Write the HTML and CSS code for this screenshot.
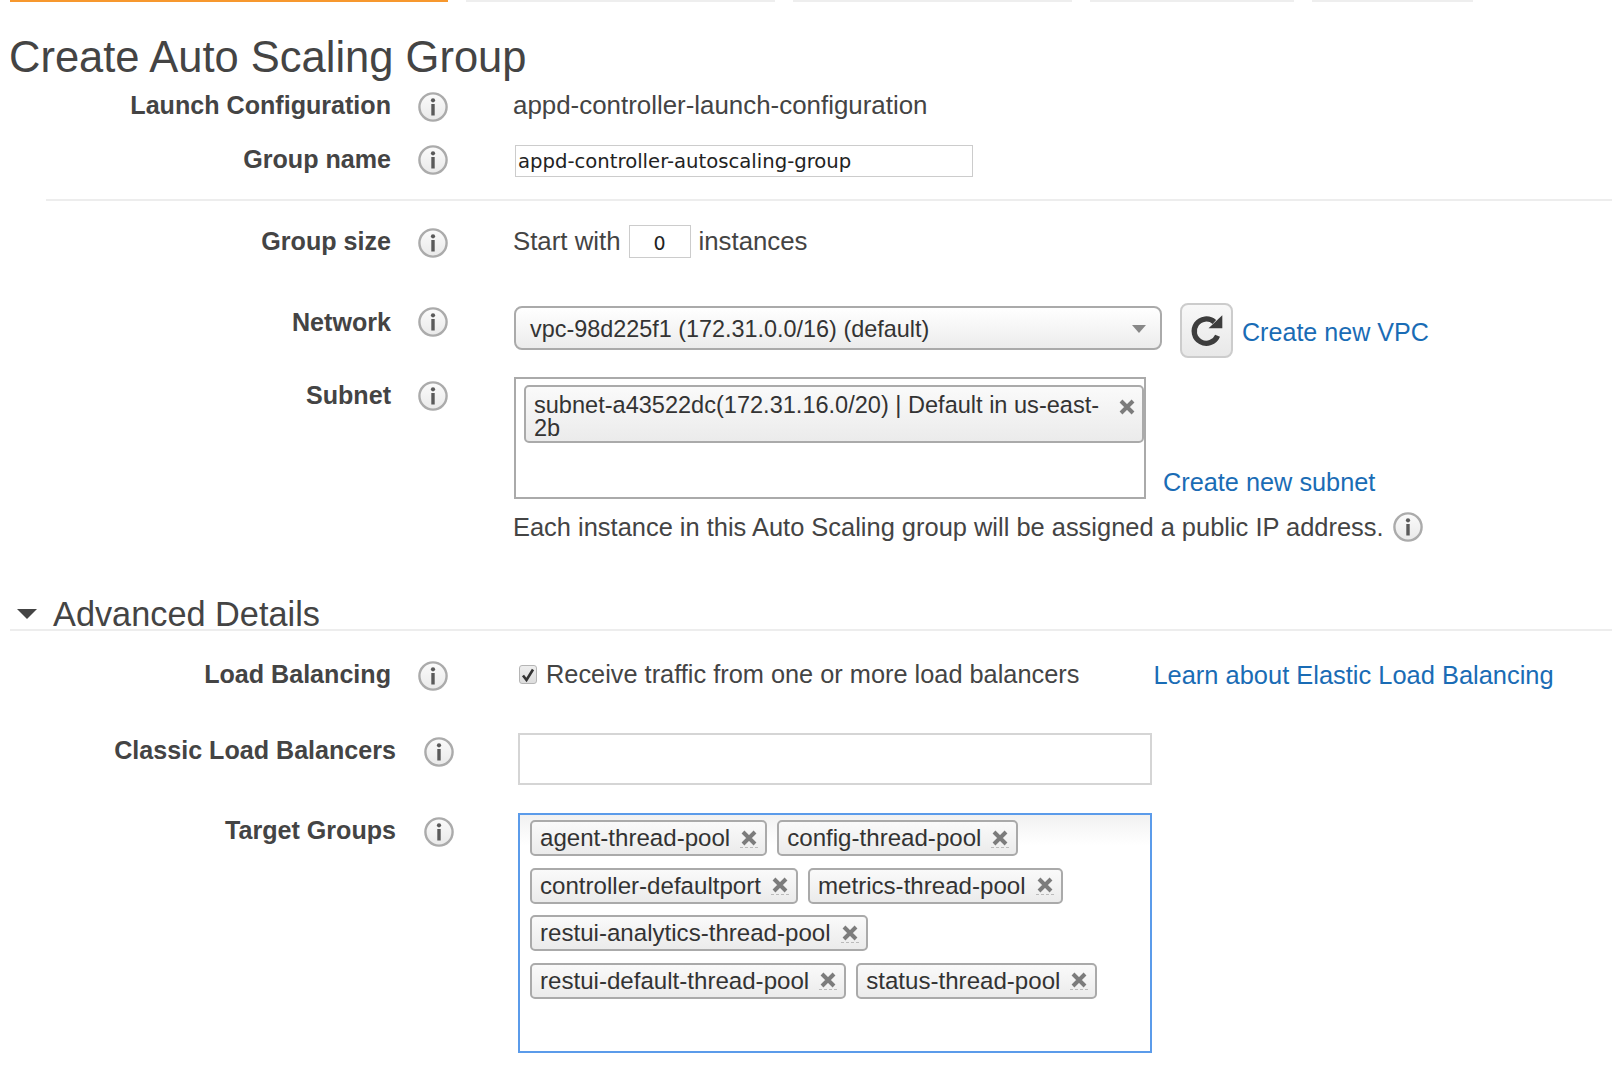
FILE: index.html
```html
<!DOCTYPE html>
<html lang="en">
<head>
<meta charset="utf-8">
<title>Create Auto Scaling Group</title>
<link rel="stylesheet" href="styles.css">
</head>
<body>
<svg class="defs" width="0" height="0" aria-hidden="true">
  <defs>
    <linearGradient id="infofill" x1="0" y1="0" x2="0" y2="1">
      <stop offset="0" stop-color="#fbfbfb"/>
      <stop offset="1" stop-color="#e9e9e9"/>
    </linearGradient>
    <symbol id="info" viewBox="0 0 30 30">
      <circle cx="15" cy="15" r="13.6" fill="url(#infofill)" stroke="#ababab" stroke-width="2.4"/>
      <circle cx="15" cy="8.3" r="2.1" fill="#5a5a5a"/>
      <rect x="13.3" y="12" width="3.4" height="11.5" fill="#5a5a5a"/>
    </symbol>
    <symbol id="close" viewBox="0 0 18 18">
      <path d="M3 3 L15 15 M15 3 L3 15" stroke="#7c7c7c" stroke-width="4" fill="none"/>
    </symbol>
  </defs>
</svg>

<nav class="steps">
  <span class="step step-active w1"></span>
  <span class="step w2"></span>
  <span class="step w3"></span>
  <span class="step w4"></span>
  <span class="step w5"></span>
</nav>

<h1 class="title">Create Auto Scaling Group</h1>

<section class="form">
  <div class="row row-launch">
    <label class="label label-up2">Launch Configuration</label>
    <svg class="info"><use href="#info"/></svg>
    <div class="value value-text">appd-controller-launch-configuration</div>
  </div>
  <div class="row row-name">
    <label class="label label-up1">Group name</label>
    <svg class="info"><use href="#info"/></svg>
    <div class="value"><input class="input input-name" value="appd-controller-autoscaling-group"></div>
  </div>
  <hr class="rule rule-inner">
  <div class="row row-size">
    <label class="label label-down1">Group size</label>
    <svg class="info info-down3"><use href="#info"/></svg>
    <div class="value value-inline">
      <span>Start with</span>
      <input class="input input-size" value="0">
      <span>instances</span>
    </div>
  </div>
  <div class="row row-network">
    <label class="label label-down4">Network</label>
    <svg class="info info-down4"><use href="#info"/></svg>
    <div class="value value-network">
      <div class="select">
        <span>vpc-98d225f1 (172.31.0.0/16) (default)</span>
        <span class="caret"></span>
      </div>
      <button class="refresh" type="button">
        <svg viewBox="0 0 36 36" width="38" height="38">
          <path d="M28 22.5 A11.5 11.5 0 1 1 25 9.5" fill="none" stroke="#3d3d3d" stroke-width="5"/>
          <path d="M19.5 15.5 H32.5 V3 Z" fill="#3d3d3d"/>
        </svg>
      </button>
      <a class="link link-vpc" href="#">Create new VPC</a>
    </div>
  </div>
  <div class="row row-subnet">
    <label class="label label-down3">Subnet</label>
    <svg class="info info-down4"><use href="#info"/></svg>
    <div class="value value-subnet">
      <div class="subnet-box">
        <div class="chip chip-subnet">
          <span class="chip-text">subnet-a43522dc(172.31.16.0/20) | Default in us-east-2b</span>
          <svg class="x x-subnet"><use href="#close"/></svg>
        </div>
      </div>
      <a class="link link-subnet" href="#">Create new subnet</a>
    </div>
  </div>
  <div class="assign">
    <span>Each instance in this Auto Scaling group will be assigned a public IP address.</span>
    <svg class="info"><use href="#info"/></svg>
  </div>
</section>

<section class="advanced">
  <div class="advanced-head">
    <span class="tri"></span>
    <h2 class="advanced-title">Advanced Details</h2>
  </div>
  <hr class="rule">
  <div class="row row-lb">
    <label class="label">Load Balancing</label>
    <svg class="info info-down2"><use href="#info"/></svg>
    <div class="value value-lb">
      <span class="check">
        <svg viewBox="0 0 18 18" width="18" height="18"><path d="M4 9.5 L7.5 14 L14 3.5" fill="none" stroke="#333" stroke-width="2.6"/></svg>
      </span>
      <span class="check-text">Receive traffic from one or more load balancers</span>
      <a class="link link-learn" href="#">Learn about Elastic Load Balancing</a>
    </div>
  </div>
  <div class="row row2 row-classic">
    <label class="label">Classic Load Balancers</label>
    <svg class="info info-down2"><use href="#info"/></svg>
    <div class="value"><div class="multi multi-empty"></div></div>
  </div>
  <div class="row row2 row-target">
    <label class="label">Target Groups</label>
    <svg class="info info-down2"><use href="#info"/></svg>
    <div class="value">
      <div class="multi multi-focus">
        <div class="chip"><span class="chip-text">agent-thread-pool</span><span class="x-wrap"><svg class="x"><use href="#close"/></svg></span></div>
        <div class="chip"><span class="chip-text">config-thread-pool</span><span class="x-wrap"><svg class="x"><use href="#close"/></svg></span></div>
        <div class="chip"><span class="chip-text">controller-defaultport</span><span class="x-wrap"><svg class="x"><use href="#close"/></svg></span></div>
        <div class="chip"><span class="chip-text">metrics-thread-pool</span><span class="x-wrap"><svg class="x"><use href="#close"/></svg></span></div>
        <div class="chip"><span class="chip-text">restui-analytics-thread-pool</span><span class="x-wrap"><svg class="x"><use href="#close"/></svg></span></div>
        <div class="chip"><span class="chip-text">restui-default-thread-pool</span><span class="x-wrap"><svg class="x"><use href="#close"/></svg></span></div>
        <div class="chip"><span class="chip-text">status-thread-pool</span><span class="x-wrap"><svg class="x"><use href="#close"/></svg></span></div>
      </div>
    </div>
  </div>
</section>
</body>
</html>
```

FILE: styles.css
```css
* { box-sizing: border-box; }
html, body { margin: 0; padding: 0; }
body {
  width: 1612px;
  height: 1082px;
  overflow: hidden;
  background: #fff;
  color: #444;
  font-family: "Liberation Sans", Arial, sans-serif;
  font-size: 25.45px;
}
.defs { position: absolute; }

.steps { display: flex; padding-left: 10px; height: 2px; }
.step { display: block; height: 2px; background: #eee; margin-right: 18px; }
.step-active { background: #f7982e; }
.w1 { width: 438px; }
.w2 { width: 309px; }
.w3 { width: 279px; }
.w4 { width: 204px; }
.w5 { width: 161px; }

.title {
  margin: 30px 0 0 9px;
  height: 50px;
  font-size: 43.5px;
  line-height: 50px;
  font-weight: 400;
  color: #444;
}

.form { margin-top: 10px; }
.row { display: flex; align-items: flex-start; }
.label {
  width: 391px;
  flex: none;
  text-align: right;
  font-size: 25.1px;
  font-weight: 700;
  line-height: 30px;
  white-space: nowrap;
}
.info { width: 30px; height: 30px; flex: none; margin-left: 27px; }
.value { margin-left: 65px; flex: none; }
.label-up2 { margin-top: -2px; }
.label-up1 { margin-top: -1px; }
.label-down1 { margin-top: 1px; }
.info-down2 { margin-top: 2px; }
.label-down3, .info-down3 { margin-top: 3px; }
.label-down4, .info-down4 { margin-top: 4px; }

.row-launch { height: 53px; }
.value-text { font-size: 25.9px; line-height: 26px; }
.row-name { height: 54px; }

.input {
  display: block;
  font-family: "DejaVu Sans", sans-serif;
  color: #222;
  background: #fff;
  border: 1px solid #ccc;
  border-radius: 0;
  outline: none;
}
.input-name {
  margin-left: 2px;
  width: 458px;
  height: 32px;
  padding: 0 2px;
  font-size: 19.65px;
}
.rule { height: 2px; margin: 0; border: 0; background: #ededed; }
.rule-inner { margin-left: 46px; }

.row-size { margin-top: 24px; height: 78px; }
.value-inline { display: flex; align-items: center; height: 33px; line-height: 33px; font-size: 25.8px; }
.input-size {
  width: 62px;
  height: 33px;
  margin: 0 8px 0 8px;
  text-align: center;
  font-size: 19px;
  padding: 3px 0 0;
}

.row-network { height: 74px; }
.value-network { display: flex; align-items: flex-start; margin-left: 66px; }
.select {
  margin-top: 3px;
  width: 648px;
  height: 44px;
  display: flex;
  align-items: center;
  justify-content: space-between;
  padding: 2px 14px 0;
  border: 2px solid #aaa;
  border-radius: 8px;
  background: linear-gradient(#fff, #ececec);
  color: #333;
  font-size: 23.4px;
  white-space: nowrap;
}
.caret {
  width: 0;
  height: 0;
  border-left: 7px solid transparent;
  border-right: 7px solid transparent;
  border-top: 8px solid #888;
}
.refresh {
  width: 53px;
  height: 55px;
  margin: 0 0 0 18px;
  padding: 0;
  display: flex;
  align-items: center;
  justify-content: center;
  border: 2px solid #ccc;
  border-radius: 8px;
  background: linear-gradient(#f8f8f8, #e8e8e8);
}
.link { color: #1a6cb5; text-decoration: none; white-space: nowrap; }
.link-vpc { margin: 14px 0 0 9px; line-height: 30px; font-size: 25.1px; }

.row-subnet { height: 134px; }
.value-subnet { display: flex; align-items: flex-start; margin-left: 66px; }
.subnet-box {
  width: 632px;
  height: 122px;
  padding: 6px 0 0 8px;
  border: 2px solid #aaa;
  background: #fff;
}
.chip {
  display: flex;
  align-items: center;
  height: 36px;
  padding: 0 7px 0 8px;
  border: 2px solid #aaa;
  border-radius: 5px;
  background: linear-gradient(#fafafa, #ebebeb);
  color: #333;
  font-size: 24.1px;
  white-space: nowrap;
}
.chip-subnet {
  width: 620px;
  height: 58px;
  padding: 7px 6px 0 8px;
  align-items: flex-start;
  justify-content: space-between;
  white-space: normal;
  font-size: 23.55px;
  line-height: 23px;
}
.chip-subnet .chip-text { width: 568px; }
.x { width: 18px; height: 18px; display: block; }
.x-subnet { margin-top: 4px; flex: none; }
.link-subnet { margin: 90px 0 0 17px; line-height: 30px; font-size: 25.3px; }
.assign {
  display: flex;
  align-items: center;
  height: 30px;
  margin: 1px 0 0 513px;
  white-space: nowrap;
}
.assign .info { margin-left: 9px; }

.advanced { margin-top: 57px; }
.advanced-head { display: flex; align-items: center; height: 30px; padding-left: 17px; }
.tri {
  width: 0;
  height: 0;
  border-left: 10px solid transparent;
  border-right: 10px solid transparent;
  border-top: 10px solid #444;
  margin-right: 16px;
}
.advanced-title { margin: 0; font-size: 34.3px; line-height: 30px; font-weight: 400; color: #444; white-space: nowrap; }
.advanced .rule { margin-left: 10px; }

.row-lb { margin-top: 28px; height: 76px; }
.value-lb { display: flex; align-items: center; height: 30px; margin-left: 71px; }
.check {
  width: 18px;
  height: 19px;
  flex: none;
  display: block;
  border: 1px solid #b5b5b5;
  border-radius: 3px;
  background: linear-gradient(#eee, #ddd);
}
.check svg { display: block; margin: 0 0 0 -1px; }
.check-text { margin-left: 9px; white-space: nowrap; color: #444; font-size: 25.35px; }
.link-learn { margin: 3px 0 0 74px; }

.row2 .label { width: 396px; }
.row2 .info { margin-left: 28px; }
.row2 .value { margin-left: 64px; }
.row-classic { height: 80px; }
.multi { width: 634px; background: #fff; }
.multi-empty { height: 52px; margin-top: -2px; border: 2px solid #d5d5d5; }
.multi-focus {
  margin-top: -2px;
  height: 240px;
  padding: 5px 10px;
  border: 2px solid #5b9bea;
  display: flex;
  flex-wrap: wrap;
  align-content: flex-start;
  gap: 11.5px 10px;
  background: linear-gradient(#f1f1f1, #fff 30px);
}
.x-wrap {
  display: block;
  margin-left: 10px;
  padding-bottom: 0;
  border-bottom: 1px dashed #bbb;
}
```
